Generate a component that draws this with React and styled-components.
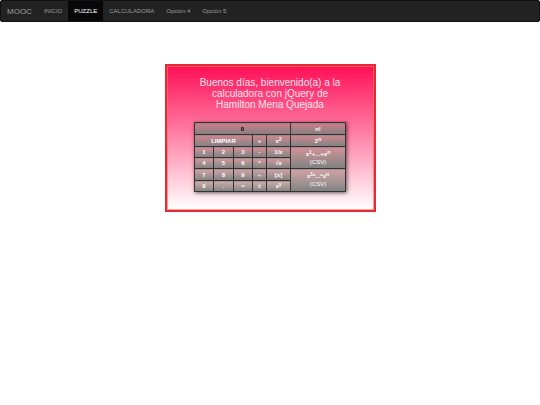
import React from 'react'
import styled, { createGlobalStyle } from 'styled-components'

const links = ['INICIO', 'PUZZLE', 'CALCULADORA', 'Opción 4', 'Opción 5']

const App = () => {
    return (
        <>
            <GlobalStyle />
            <Navbar>
                <Brand href="#">MOOC</Brand>
                {links.map((link) => (
                    <NavLink key={link} href="#" $active={link === 'PUZZLE'}>{link}</NavLink>
                ))}
            </Navbar>
            <Main>
                <Panel>
                    <Title>Buenos días, bienvenido(a) a la calculadora con jQuery de Hamilton Mena Quejada</Title>
                    <Calculator>
                        <colgroup>
                            <Col $width={19} />
                            <Col $width={20} />
                            <Col $width={19} />
                            <Col $width={14} />
                            <Col $width={24} />
                            <Col $width={55} />
                        </colgroup>
                        <tbody>
                            <Row $height={12}>
                                <Cell colSpan={5}><Display>0</Display></Cell>
                                <Cell><Key>n!</Key></Cell>
                            </Row>
                            <Row $height={12}>
                                <Cell colSpan={3}><Key>LIMPIAR</Key></Cell>
                                <Cell><Key>+</Key></Cell>
                                <Cell><Key>x<sup>2</sup></Key></Cell>
                                <Cell><Key>2<sup>n</sup></Key></Cell>
                            </Row>
                            <Row>
                                <Cell><Key>1</Key></Cell>
                                <Cell><Key>2</Key></Cell>
                                <Cell><Key>3</Key></Cell>
                                <Cell><Key>-</Key></Cell>
                                <Cell><Key>1/x</Key></Cell>
                                <Cell rowSpan={2}>
                                    <Key $tall>x<sup>1</sup>+...+x<sup>n</sup><Note>(CSV)</Note></Key>
                                </Cell>
                            </Row>
                            <Row>
                                <Cell><Key>4</Key></Cell>
                                <Cell><Key>5</Key></Cell>
                                <Cell><Key>6</Key></Cell>
                                <Cell><Key>*</Key></Cell>
                                <Cell><Key>√x</Key></Cell>
                            </Row>
                            <Row $height={12}>
                                <Cell><Key>7</Key></Cell>
                                <Cell><Key>8</Key></Cell>
                                <Cell><Key>9</Key></Cell>
                                <Cell><Key>÷</Key></Cell>
                                <Cell><Key>[x]</Key></Cell>
                                <Cell rowSpan={2}>
                                    <Key $tall>x<sup>1</sup>*...*x<sup>n</sup><Note>(CSV)</Note></Key>
                                </Cell>
                            </Row>
                            <Row>
                                <Cell><Key>0</Key></Cell>
                                <Cell><Key>.</Key></Cell>
                                <Cell><Key>=</Key></Cell>
                                <Cell><Key>±</Key></Cell>
                                <Cell><Key>x<sup>y</sup></Key></Cell>
                            </Row>
                        </tbody>
                    </Calculator>
                </Panel>
            </Main>
        </>
    )
}

export default App

const GlobalStyle = createGlobalStyle`
    * {
        box-sizing: border-box;
    }
    body {
        margin: 0;
        background-color: #fff;
        font-family: "Liberation Sans", Arial, sans-serif;
        font-size: 6px;
    }
`
const Navbar = styled.nav`
    display: flex;
    height: 22px;
    border: 1px solid #111;
    border-radius: 2px;
    background-color: #222;
`
const Brand = styled.a`
    display: flex;
    align-items: center;
    padding: 0 6px;
    font-size: 8px;
    color: #9d9d9d;
    text-decoration: none;
`
const NavLink = styled.a`
    display: flex;
    align-items: center;
    padding: 0 6px;
    background-color: ${({ $active }) => ($active ? '#080808' : 'transparent')};
    color: ${({ $active }) => ($active ? '#fff' : '#9d9d9d')};
    text-decoration: none;
`
const Main = styled.main`
    display: flex;
    justify-content: center;
    padding: 42px 12px;
`
const Panel = styled.section`
    display: flex;
    flex-direction: column;
    align-items: center;
    width: 39%;
    min-width: 211px;
    padding: 11px 27px 18px;
    border: 2px solid #e62a35;
    background: linear-gradient(#ff0f58, #fff);
    box-shadow: inset 0 0 0 1px rgba(255, 120, 90, 0.7);
`
const Title = styled.h1`
    max-width: 152px;
    margin: 0 0 12px;
    font-size: 10px;
    font-weight: 400;
    line-height: 11px;
    text-align: center;
    color: #ffe6ee;
`
const Calculator = styled.table`
    width: 151px;
    table-layout: fixed;
    border-collapse: collapse;
    box-shadow: 1px 1px 4px rgba(0, 0, 0, 0.6);
`
const Col = styled.col`
    width: ${({ $width }) => $width}px;
`
const Row = styled.tr`
    height: ${({ $height }) => $height || 11}px;
`
const Cell = styled.td`
    height: inherit;
    padding: 0;
    border: 1px solid #333;
    background: linear-gradient(rgba(160, 135, 120, 0.5), #808080);
`
const Key = styled.button`
    display: block;
    width: 100%;
    height: ${({ $tall }) => ($tall ? 20 : 10)}px;
    padding: 0;
    border: none;
    background: none;
    font: bold 6px/8px "Liberation Sans", Arial, sans-serif;
    text-align: center;
    color: #fff;
    cursor: pointer;

    sup {
        font-size: 5px;
        line-height: 0;
        vertical-align: 2px;
    }
`
const Note = styled.span`
    display: block;
    font-weight: 400;
`
const Display = styled.output`
    display: block;
    font-weight: bold;
    line-height: 10px;
    text-align: center;
    color: #000;
`
